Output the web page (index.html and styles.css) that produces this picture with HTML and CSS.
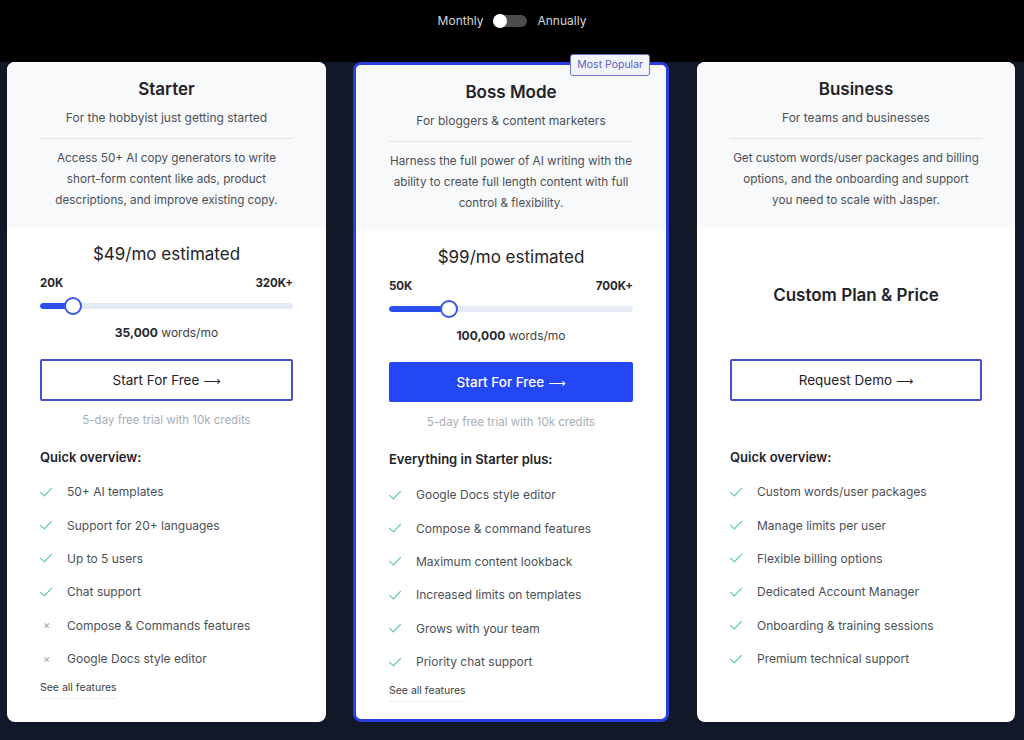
FILE: index.html
```html
<!DOCTYPE html>
<html lang="en">
<head>
<meta charset="utf-8">
<title>Pricing</title>
<link rel="stylesheet" href="styles.css">
</head>
<body>
<header class="topbar">
  <span class="toggle-label">Monthly</span>
  <span class="switch"><span class="knob"></span></span>
  <span class="toggle-label">Annually</span>
</header>

<main class="plans">
  <!-- Starter -->
  <section class="card">
    <div class="card-head">
      <h2 class="plan-name">Starter</h2>
      <p class="plan-sub">For the hobbyist just getting started</p>
      <p class="plan-desc">Access 50+ AI copy generators to write short-form content like ads, product descriptions, and improve existing copy.</p>
    </div>
    <div class="card-body">
      <div class="price-area">
        <div class="price">$49/mo estimated</div>
        <div class="range-labels"><span>20K</span><span>320K+</span></div>
        <div class="slider">
          <div class="track"><div class="fill" style="width:13%"></div></div>
          <span class="thumb" style="left:13%"></span>
        </div>
        <div class="words"><b>35,000</b> words/mo</div>
      </div>
      <a class="btn btn-outline" href="#">Start For Free <span class="arrow">⟶</span></a>
      <p class="trial">5-day free trial with 10k credits</p>
      <h3 class="list-title">Quick overview:</h3>
      <ul class="features">
        <li><span class="ico ok"></span>50+ AI templates</li>
        <li><span class="ico ok"></span>Support for 20+ languages</li>
        <li><span class="ico ok"></span>Up to 5 users</li>
        <li><span class="ico ok"></span>Chat support</li>
        <li><span class="ico no">×</span>Compose &amp; Commands features</li>
        <li><span class="ico no">×</span>Google Docs style editor</li>
      </ul>
      <a class="see-all" href="#">See all features</a>
    </div>
  </section>

  <!-- Boss Mode -->
  <section class="card card-featured">
    <span class="badge">Most Popular</span>
    <div class="card-head">
      <h2 class="plan-name">Boss Mode</h2>
      <p class="plan-sub">For bloggers &amp; content marketers</p>
      <p class="plan-desc">Harness the full power of AI writing with the ability to create full length content with full control &amp; flexibility.</p>
    </div>
    <div class="card-body">
      <div class="price-area">
        <div class="price">$99/mo estimated</div>
        <div class="range-labels"><span>50K</span><span>700K+</span></div>
        <div class="slider">
          <div class="track"><div class="fill" style="width:24.7%"></div></div>
          <span class="thumb" style="left:24.7%"></span>
        </div>
        <div class="words"><b>100,000</b> words/mo</div>
      </div>
      <a class="btn btn-solid" href="#">Start For Free <span class="arrow">⟶</span></a>
      <p class="trial">5-day free trial with 10k credits</p>
      <h3 class="list-title">Everything in Starter plus:</h3>
      <ul class="features">
        <li><span class="ico ok"></span>Google Docs style editor</li>
        <li><span class="ico ok"></span>Compose &amp; command features</li>
        <li><span class="ico ok"></span>Maximum content lookback</li>
        <li><span class="ico ok"></span>Increased limits on templates</li>
        <li><span class="ico ok"></span>Grows with your team</li>
        <li><span class="ico ok"></span>Priority chat support</li>
      </ul>
      <a class="see-all" href="#">See all features</a>
    </div>
  </section>

  <!-- Business -->
  <section class="card card-last">
    <div class="card-head">
      <h2 class="plan-name">Business</h2>
      <p class="plan-sub">For teams and businesses</p>
      <p class="plan-desc">Get custom words/user packages and billing options, and the onboarding and support<br>you need to scale with Jasper.</p>
    </div>
    <div class="card-body">
      <div class="price-area custom">
        <div class="price">Custom Plan &amp; Price</div>
      </div>
      <a class="btn btn-outline" href="#">Request Demo <span class="arrow">⟶</span></a>
      <div class="trial-spacer"></div>
      <h3 class="list-title">Quick overview:</h3>
      <ul class="features">
        <li><span class="ico ok"></span>Custom words/user packages</li>
        <li><span class="ico ok"></span>Manage limits per user</li>
        <li><span class="ico ok"></span>Flexible billing options</li>
        <li><span class="ico ok"></span>Dedicated Account Manager</li>
        <li><span class="ico ok"></span>Onboarding &amp; training sessions</li>
        <li><span class="ico ok"></span>Premium technical support</li>
      </ul>
    </div>
  </section>
</main>
</body>
</html>
```

FILE: styles.css
```css
* { box-sizing: border-box; }

html, body {
  margin: 0;
  padding: 0;
}

body {
  background: #111827;
  font-family: Inter, "Noto Sans", "Liberation Sans", sans-serif;
  color: #1f2328;
  width: 1024px;
  height: 740px;
  overflow: hidden;
}

/* ---------- top toggle ---------- */
.topbar {
  height: 62px;
  background: #000;
  display: flex;
  justify-content: center;
  align-items: flex-start;
  padding-top: 13px;
  gap: 9px;
}
.toggle-label {
  color: #d4d6da;
  font-size: 12px;
  line-height: 16px;
}
.switch {
  width: 34px;
  height: 12px;
  margin-top: 2px;
  border-radius: 6px;
  background: #4d4d4f;
  position: relative;
  display: inline-block;
  margin-left: 1px;
  margin-right: 1px;
}
.knob {
  position: absolute;
  left: 0;
  top: -1px;
  width: 14px;
  height: 14px;
  border-radius: 50%;
  background: #fff;
}

/* ---------- plans ---------- */
.plans {
  display: grid;
  grid-template-columns: 319px 316px 319px;
  column-gap: 27px;
  padding-left: 7px;
}

.card {
  position: relative;
  height: 660px;
  background: #fff;
  border-radius: 8px;
}
.card-featured {
  border: 3px solid #2b3fe0;
}
.card-last { margin-left: 1px; }

.card-head {
  background: #f8f9fb;
  border-radius: 8px 8px 0 0;
  padding: 15px 33px 17px;
  text-align: center;
}
.card-featured .card-head { border-radius: 5px 5px 0 0; }

.plan-name {
  margin: 0;
  font-size: 17px;
  line-height: 24px;
  font-weight: 600;
  color: #1f2328;
}
.plan-sub {
  margin: 7px 0 0;
  font-size: 12px;
  line-height: 20px;
  color: #4b5057;
  padding-bottom: 10px;
  border-bottom: 1px solid #e2e4e8;
}
.plan-desc {
  margin: 9px 0 0;
  font-size: 11.7px;
  line-height: 21px;
  color: #4b5057;
}

.card-body {
  padding: 14px 33px 0;
}

.price-area { height: 100px; }
.price {
  text-align: center;
  font-size: 17px;
  line-height: 24px;
  color: #1f2328;
  font-weight: 400;
}
.range-labels {
  margin-top: 9px;
  display: flex;
  justify-content: space-between;
  font-size: 11.5px;
  line-height: 16px;
  font-weight: 700;
  color: #25282d;
}
.slider {
  position: relative;
  margin-top: 6px;
  height: 18px;
  display: flex;
  align-items: center;
}
.track {
  width: 100%;
  height: 6px;
  border-radius: 3px;
  background: #e6eaf5;
  overflow: hidden;
}
.fill {
  height: 100%;
  background: #2b4ff0;
  border-radius: 3px;
}
.thumb {
  position: absolute;
  top: 0;
  width: 18px;
  height: 18px;
  margin-left: -9px;
  border-radius: 50%;
  background: #fff;
  border: 2px solid #3b55e6;
}
.words {
  margin-top: 9px;
  text-align: center;
  font-size: 12px;
  line-height: 18px;
  color: #3b3f45;
}
.words b { font-weight: 700; color: #25282d; }

.custom {
  display: flex;
  align-items: center;
  justify-content: center;
  padding-top: 6px;
}
.custom .price { font-weight: 600; }

.btn {
  display: flex;
  align-items: center;
  justify-content: center;
  margin-top: 17px;
  height: 42px;
  border-radius: 2px;
  font-size: 13.5px;
  text-decoration: none;
}
.arrow {
  font-family: "DejaVu Sans", sans-serif;
  font-size: 12px;
  margin-left: 4px;
  line-height: 1;
  position: relative;
  top: 1px;
}
.btn-outline {
  border: 2px solid #4252c9;
  color: #1f2328;
  background: #fff;
}
.btn-solid {
  background: #2447f5;
  color: #fff;
  font-weight: 500;
  height: 40px;
}

.trial {
  margin: 10px 0 0;
  text-align: center;
  font-size: 11.5px;
  line-height: 18px;
  color: #a8adb5;
}
.card-featured .trial { margin-top: 11px; }
.trial-spacer { height: 28px; }

.list-title {
  margin: 18px 0 0;
  font-size: 13px;
  line-height: 20px;
  font-weight: 600;
  color: #1f2328;
}

.features {
  list-style: none;
  margin: 8px 0 0;
  padding: 0;
}
.card-featured .features { margin-top: 9px; }
.features li {
  height: 33.4px;
  display: flex;
  align-items: center;
  font-size: 12px;
  color: #4b5057;
}
.ico {
  width: 27px;
  flex: none;
  display: inline-flex;
  align-items: center;
}
.ok::before {
  content: "";
  display: block;
  width: 5px;
  height: 10px;
  margin-left: 3px;
  margin-top: -3px;
  border-right: 1.5px solid #52c49c;
  border-bottom: 1.5px solid #52c49c;
  transform: rotate(40deg) skewX(-4deg);
}
.no {
  color: #9ca1a8;
  font-size: 11px;
  padding-left: 3px;
}

.see-all {
  display: inline-block;
  margin-top: 4px;
  font-size: 10.5px;
  line-height: 14px;
  padding-bottom: 3px;
  color: #3b3f45;
  text-decoration: none;
  border-bottom: 1px solid #eceef1;
}

.badge {
  position: absolute;
  top: -11px;
  right: 16px;
  background: #f3f4fa;
  border: 1px solid #6f74c6;
  border-radius: 3px;
  padding: 0 6px;
  font-size: 10.5px;
  line-height: 20px;
  color: #5a5fbf;
}
```
